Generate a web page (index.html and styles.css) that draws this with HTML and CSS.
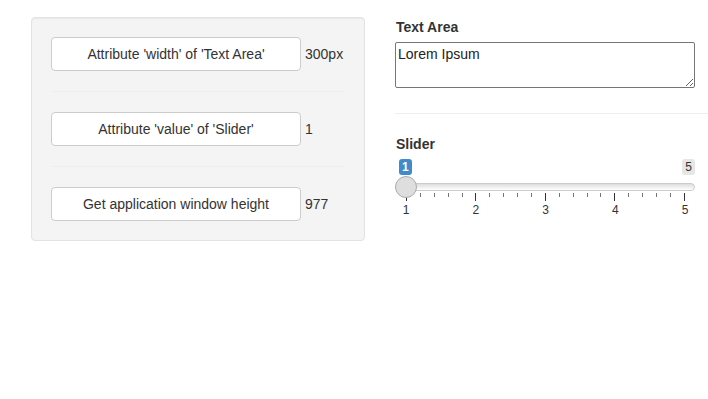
FILE: index.html
```html
<!DOCTYPE html>
<html lang="en">
<head>
  <meta charset="UTF-8" />
  <title>Attributes demo</title>
  <link rel="stylesheet" href="styles.css">
</head>
<body>
  <div class="page">
    <!-- Left: buttons with results -->
    <div class="well">
      <div class="action-row">
        <button class="btn">Attribute 'width' of 'Text Area'</button>
        <span class="result">300px</span>
      </div>
      <hr>
      <div class="action-row">
        <button class="btn">Attribute 'value' of 'Slider'</button>
        <span class="result">1</span>
      </div>
      <hr>
      <div class="action-row">
        <button class="btn">Get application window height</button>
        <span class="result">977</span>
      </div>
    </div>

    <!-- Right: inputs -->
    <div class="inputs">
      <div class="form-group">
        <label for="txt">Text Area</label>
        <textarea id="txt" class="text-area">Lorem Ipsum</textarea>
      </div>
      <hr>
      <div class="form-group">
        <label>Slider</label>
        <div class="irs">
          <div class="irs-labels">
            <span class="irs-single">1</span>
            <span class="irs-max">5</span>
          </div>
          <div class="irs-body">
            <div class="irs-line"></div>
            <div class="irs-handle"></div>
          </div>
          <div class="irs-grid">
            <span class="tick major"></span><span class="tick"></span><span class="tick"></span><span class="tick"></span><span class="tick"></span>
            <span class="tick major"></span><span class="tick"></span><span class="tick"></span><span class="tick"></span><span class="tick"></span>
            <span class="tick major"></span><span class="tick"></span><span class="tick"></span><span class="tick"></span><span class="tick"></span>
            <span class="tick major"></span><span class="tick"></span><span class="tick"></span><span class="tick"></span><span class="tick"></span>
            <span class="tick major"></span>
          </div>
          <div class="irs-grid-text">
            <span>1</span><span>2</span><span>3</span><span>4</span><span>5</span>
          </div>
        </div>
      </div>
    </div>
  </div>
</body>
</html>
```

FILE: styles.css
```css
body {
  margin: 0;
  font-family: "Liberation Sans", Arial, sans-serif;
  font-size: 14px;
  line-height: 20px;
  color: #333;
  background: #fff;
}

.page {
  display: flex;
  align-items: flex-start;
  gap: 30px;
  padding: 17px 0 0 31px;
}

/* Well with buttons */
.well {
  width: 334px;
  box-sizing: border-box;
  padding: 19px;
  background-color: #f4f4f4;
  border: 1px solid #e3e3e3;
  border-radius: 4px;
  box-shadow: inset 0 1px 1px rgba(0,0,0,0.05);
}

.action-row {
  display: flex;
  align-items: center;
}

.btn {
  width: 250px;
  height: 34px;
  padding: 6px 12px;
  font-family: inherit;
  font-size: 14px;
  line-height: 20px;
  color: #333;
  background-color: #fff;
  border: 1px solid #ccc;
  border-radius: 4px;
  cursor: pointer;
}

.result {
  margin-left: 4px;
}

hr {
  margin: 20px 0;
  border: 0;
  border-top: 1px solid #eee;
}

/* Inputs column */
.inputs {
  flex: 1;
}

.inputs hr {
  margin-top: 25px;
}

label {
  display: block;
  font-weight: bold;
  margin-bottom: 5px;
  padding-left: 1px;
}

.text-area {
  display: block;
  width: 300px;
  height: 46px;
  box-sizing: border-box;
  padding: 3px 2px;
  font-family: inherit;
  font-size: 14px;
  line-height: 16px;
  color: #222;
  border: 1px solid #767676;
  border-radius: 2px;
}

/* Slider */
.irs {
  width: 300px;
}

.irs-labels {
  display: flex;
  justify-content: space-between;
  padding: 0 0 0 4px;
  height: 17px;
}

.irs-single,
.irs-max {
  font-size: 12px;
  line-height: 16px;
  padding: 0 3px;
  border-radius: 3px;
  height: 16px;
}

.irs-single {
  background-color: #428bca;
  color: #fff;
  font-weight: bold;
}

.irs-max {
  background-color: #e6e6e6;
  color: #333;
}

.irs-body {
  position: relative;
  height: 22px;
}

.irs-line {
  position: absolute;
  left: 1px;
  right: 0;
  top: 7px;
  height: 6px;
  border: 1px solid #ccc;
  border-radius: 16px;
  background: linear-gradient(#ddd, #fff);
}

.irs-handle {
  position: absolute;
  left: 0;
  top: 0;
  width: 20px;
  height: 20px;
  border: 1px solid #ababab;
  border-radius: 50%;
  background-color: #dedede;
}

.irs-grid {
  display: flex;
  justify-content: space-between;
  align-items: flex-start;
  margin: -5px 10px 0 11px;
  height: 8px;
}

.tick {
  width: 1px;
  height: 4px;
  background-color: #777;
}

.tick.major {
  height: 8px;
  background-color: #333;
}

.irs-grid-text {
  display: flex;
  justify-content: space-between;
  margin: 2px 0 0 1px;
  width: 299px;
  font-size: 12px;
  line-height: 14px;
}

.irs-grid-text span {
  width: 20px;
  text-align: center;
}
```
